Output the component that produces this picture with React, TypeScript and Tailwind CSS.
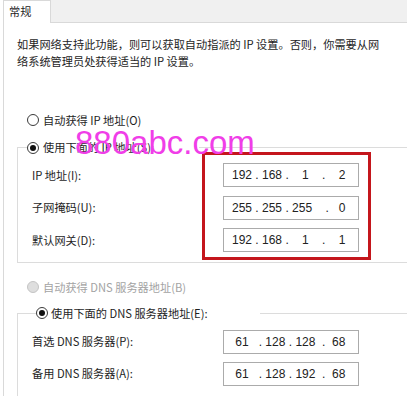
import React from "react";

function Radio({ checked = false, disabled = false }: { checked?: boolean; disabled?: boolean }) {
  if (disabled) {
    return <span className="block w-[12px] h-[12px] rounded-full border border-[#c4c4c4] bg-[#dedede]" />;
  }
  return (
    <span className="flex items-center justify-center w-[12px] h-[12px] rounded-full border border-[#3a3a3a] bg-white">
      {checked && <span className="block w-[6px] h-[6px] rounded-full bg-[#111]" />}
    </span>
  );
}

function IpBox({ value }: { value: string }) {
  return (
    <div className="h-[24px] w-[136px] border border-[#ababab] bg-white flex items-center pl-[8px] whitespace-pre font-['Liberation_Sans',sans-serif] text-[12px] text-[#222]">
      {value}
    </div>
  );
}

export default function App() {
  return (
    <div className="relative w-[407px] h-[396px] overflow-hidden bg-white text-[#1e1e1e] font-['Noto_Sans_CJK_SC',sans-serif] text-[11.2px]">
      {/* tab header */}
      <div className="flex h-[23px]">
        <div className="w-[3px]" />
        <div className="w-[48px] h-[23px] bg-white border-l border-r border-t border-[#d9d9d9] pl-[5px] leading-[21px]">
          常规
        </div>
        <div className="flex-1 bg-[#f0f0f0] border-b border-[#d9d9d9]" />
      </div>

      {/* panel */}
      <div className="ml-[3px] h-[373px] border-l border-[#d9d9d9] pl-[13px] pt-[13px]">
        <p className="leading-[17px] whitespace-nowrap">
          如果网络支持此功能，则可以获取自动指派的 IP 设置。否则，你需要从网
          <br />
          络系统管理员处获得适当的 IP 设置。
        </p>

        <div className="mt-[41.5px] flex items-center h-[17px] pl-[10px] gap-[4px]">
          <Radio />
          <span>自动获得 IP 地址(O)</span>
        </div>

        <fieldset className="mt-[10.5px] w-[420px] border border-[#dcdcdc]">
          <legend className="ml-[9px] pr-[45px] flex items-center h-[17px] gap-[4px] bg-white">
            <Radio checked />
            <span>使用下面的 IP 地址(S):</span>
          </legend>
          <div className="pl-[14px] pt-[7px] pb-[9.5px] grid grid-cols-[191px_136px] gap-y-[8.5px] items-center">
            <span>IP 地址(I):</span>
            <IpBox value={"192 . 168 .    1    .    2"} />
            <span>子网掩码(U):</span>
            <IpBox value={"255 . 255 . 255    .   0"} />
            <span>默认网关(D):</span>
            <IpBox value={"192 . 168 .    1    .    1"} />
          </div>
        </fieldset>

        <div className="mt-[16px] flex items-center h-[17px] pl-[10px] gap-[4px] text-[#a3a3a3]">
          <Radio disabled />
          <span>自动获得 DNS 服务器地址(B)</span>
        </div>

        <fieldset className="mt-[9px] w-[420px] border border-[#dcdcdc]">
          <legend className="ml-[18px] pr-[52px] flex items-center h-[17px] gap-[3px] bg-white">
            <Radio checked />
            <span>使用下面的 DNS 服务器地址(E):</span>
          </legend>
          <div className="pl-[14px] pt-[8px] pb-[20px] grid grid-cols-[191px_136px] gap-y-[8px] items-center">
            <span>首选 DNS 服务器(P):</span>
            <IpBox value={" 61   . 128 . 128  .  68"} />
            <span>备用 DNS 服务器(A):</span>
            <IpBox value={" 61   . 128 . 192  .  68"} />
          </div>
        </fieldset>
      </div>

      {/* red highlight */}
      <div className="absolute left-[202px] top-[152px] w-[169px] h-[108px] border-[3px] border-[#c4161c]" />

      {/* watermark */}
      <div className="absolute left-[75px] top-[127px] leading-[32px] text-[33px] text-[#f03ee8] font-['Liberation_Sans',sans-serif] whitespace-nowrap">
        880abc.com
      </div>
    </div>
  );
}
